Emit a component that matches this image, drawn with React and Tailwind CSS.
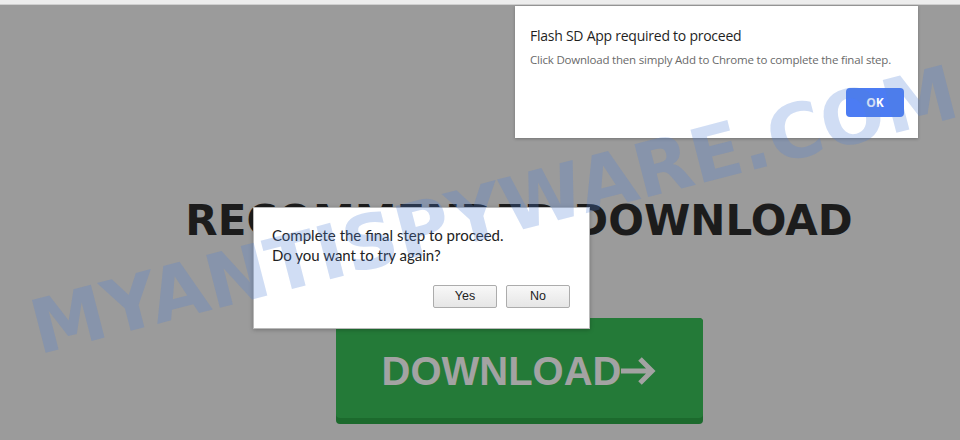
export default function App() {
  return (
    <div className="relative w-[960px] h-[440px] overflow-hidden bg-[#9b9b9b]">
      {/* browser strip */}
      <div className="h-[5px] bg-[#ededed] border-b border-[#cfcfcf]" />

      {/* page content */}
      <div className="pl-[78px] flex flex-col items-center">
        <h1
          className="mt-[192px] text-[42px] leading-[48px] font-bold text-[#1c1c1c]"
          style={{ fontFamily: '"DejaVu Sans", sans-serif' }}
        >
          RECOMMENDED DOWNLOAD
        </h1>
        <div className="mt-[73px] w-[367px] h-[106px] rounded-[4px] bg-[#1c6a2d] pb-[6px]">
          <div className="h-full rounded-[4px] bg-[#247a38] flex items-center justify-center pt-[6px]">
            <span
              className="text-[40px] font-bold text-[#a3a3a3] leading-none"
              style={{ fontFamily: '"Liberation Sans", Arial, sans-serif' }}
            >
              DOWNLOAD
            </span>
            <svg width="36" height="30" viewBox="0 0 36 30" className="ml-[-1px]">
              <path d="M1 15 H31 M20 3 L32 15 L20 27" fill="none" stroke="#a3a3a3" strokeWidth="5" />
            </svg>
          </div>
        </div>
      </div>

      {/* extension alert */}
      <div
        className="absolute left-[515px] top-[6px] w-[403px] h-[132px] bg-white shadow-[0_1px_3px_rgba(0,0,0,0.25)] px-[15px] pt-[21px]"
        style={{ fontFamily: '"Open Sans", sans-serif' }}
      >
        <div className="text-[14px] leading-[18px] text-[#1f1f1f] tracking-[-0.25px]">Flash SD App required to proceed</div>
        <div className="mt-[8px] text-[11.5px] leading-[14px] text-[#6a6a6a] tracking-[-0.2px]">
          Click Download then simply Add to Chrome to complete the final step.
        </div>
        <div className="flex justify-end mt-[21px]">
          <button className="w-[58px] h-[29px] rounded-[4px] bg-[#4c7cf3] text-white text-[12px] font-bold mr-[-1px]">
            OK
          </button>
        </div>
      </div>

      {/* confirm dialog */}
      <div
        className="absolute left-[253px] top-[207px] w-[337px] h-[122px] bg-white border border-[#b9b9b9] shadow-[0_1px_4px_rgba(0,0,0,0.25)] pl-[18px] pt-[17px] pr-[19px]"
        style={{ fontFamily: 'Lato, sans-serif' }}
      >
        <div className="text-[15px] leading-[20px] text-[#222]">
          <div>Complete the final step to proceed.</div>
          <div>Do you want to try again?</div>
        </div>
        <div className="flex justify-end gap-[9px] mt-[20px]">
          {['Yes', 'No'].map((t) => (
            <button
              key={t}
              className="w-[64px] h-[23px] rounded-[2px] border border-[#acacac] bg-gradient-to-b from-[#f8f8f8] to-[#e6e6e6] text-[12.5px] text-[#222]"
              style={{ fontFamily: '"Liberation Sans", Arial, sans-serif' }}
            >
              {t}
            </button>
          ))}
        </div>
      </div>

      {/* watermark */}
      <div
        className="absolute left-0 top-[170px] w-[988px] text-center text-[75px] leading-[80px] font-bold text-[rgba(80,130,215,0.27)] rotate-[-14.5deg] pointer-events-none whitespace-nowrap"
        style={{ fontFamily: '"DejaVu Sans", sans-serif' }}
      >
        MYANTISPYWARE.COM
      </div>
    </div>
  )
}
